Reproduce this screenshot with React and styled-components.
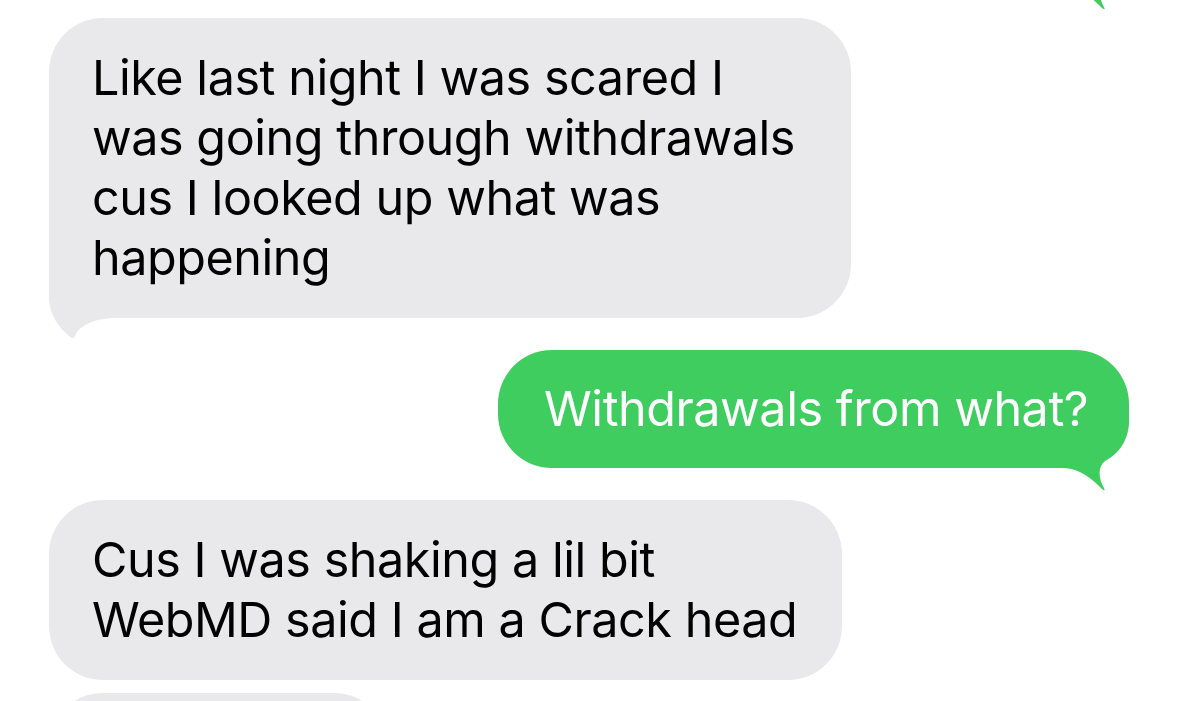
import React from "react";
import styled, { createGlobalStyle } from "styled-components";

const GlobalStyle = createGlobalStyle`
  html, body {
    margin: 0;
    padding: 0;
    background: #ffffff;
    overflow: hidden;
  }
  body {
    font-family: Inter, "Noto Sans", "Liberation Sans", sans-serif;
    -webkit-font-smoothing: antialiased;
  }
`;

const Screen = styled.div`
  width: 1179px;
  height: 701px;
  overflow: hidden;
  background: #ffffff;
`;

const Thread = styled.div`
  display: flex;
  flex-direction: column;
  margin-top: -131px;
  padding: 0 50px 0 49px;
`;

const Row = styled.div`
  display: flex;
  justify-content: ${(p) => (p.$out ? "flex-end" : "flex-start")};
  margin-top: ${(p) => p.$gap}px;
`;

const Bubble = styled.div`
  position: relative;
  box-sizing: border-box;
  width: ${(p) => (p.$w ? `${p.$w}px` : "auto")};
  padding: ${(p) => (p.$out ? "29px 46px" : "30px 42px 30px 43px")};
  border-radius: 54px;
  background: ${(p) => (p.$out ? "#3ECD5E" : "#E9E9EB")};
  color: ${(p) => (p.$out ? "#ffffff" : "#000000")};
  font-size: 48.5px;
  line-height: 60px;
  letter-spacing: -0.45px;
  white-space: pre;
`;

const Text = styled.span`
  position: relative;
  z-index: 1;
`;

const Tail = styled.svg`
  position: absolute;
  bottom: -25px;
  ${(p) => (p.$out ? "right: 0;" : "left: 0;")}
  width: 70px;
  height: 80px;
  overflow: visible;
  pointer-events: none;
  z-index: 0;
`;

function BubbleTail({ out }) {
  if (out) {
    return (
      <Tail $out viewBox="-70 -55 70 80" aria-hidden="true">
        <path
          fill="#3ECD5E"
          d="M0,-55 L0,-44 C-1,-28 -10,-14 -24,-7 C-31,-2 -31,10 -25,20 Q-23,24 -27,21 C-36,12 -46,2 -64,0 L-64,-55 Z"
        />
      </Tail>
    );
  }
  return (
    <Tail viewBox="0 -55 70 80" aria-hidden="true">
      <path
        fill="#E9E9EB"
        d="M0,-55 L0,-18 C1,-4 9,9 20,18 Q25,22 26,18 C30,8 44,1 64,0 L64,-55 Z"
      />
    </Tail>
  );
}

const messages = [
  { id: 0, out: true, gap: 0, tail: true, text: "Okay" },
  {
    id: 1,
    out: false,
    gap: 31,
    tail: true,
    w: 802,
    text:
      "Like last night I was scared I\nwas going through withdrawals\ncus I looked up what was\nhappening",
  },
  { id: 2, out: true, gap: 32, tail: true, w: 631, text: "Withdrawals from what?" },
  {
    id: 3,
    out: false,
    gap: 32,
    tail: false,
    w: 793,
    text: "Cus I was shaking a lil bit\nWebMD said I am a Crack head",
  },
  { id: 4, out: false, gap: 13, tail: true, w: 339, text: "Like crazy" },
];

export default function App() {
  return (
    <Screen>
      <GlobalStyle />
      <Thread>
        {messages.map((m) => (
          <Row key={m.id} $out={m.out} $gap={m.gap}>
            <Bubble $out={m.out} $w={m.w}>
              {m.tail && <BubbleTail out={m.out} />}
              <Text>{m.text}</Text>
            </Bubble>
          </Row>
        ))}
      </Thread>
    </Screen>
  );
}
